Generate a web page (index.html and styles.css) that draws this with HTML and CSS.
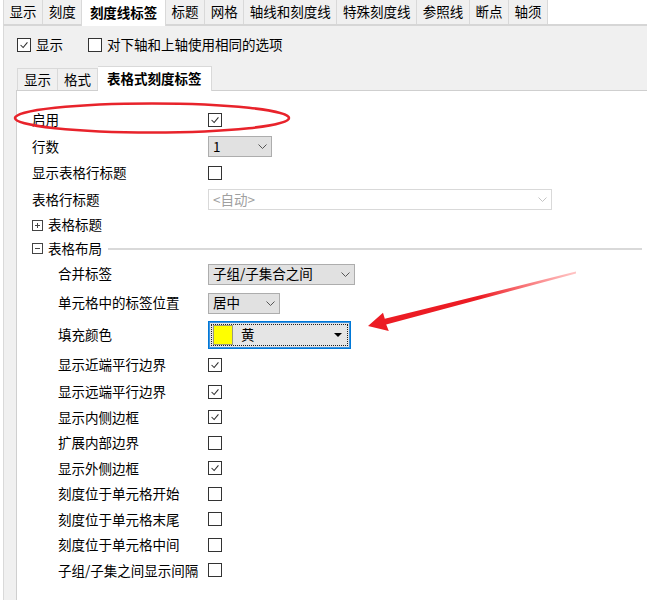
FILE: index.html
```html
<!DOCTYPE html>
<html lang="zh-CN">
<head>
<meta charset="utf-8">
<title>刻度线标签</title>
<link rel="stylesheet" href="styles.css">
</head>
<body>
<div class="tabs">
  <div class="tab">显示</div>
  <div class="tab">刻度</div>
  <div class="tab active">刻度线标签</div>
  <div class="tab">标题</div>
  <div class="tab">网格</div>
  <div class="tab">轴线和刻度线</div>
  <div class="tab">特殊刻度线</div>
  <div class="tab">参照线</div>
  <div class="tab">断点</div>
  <div class="tab">轴须</div>
</div>
<div class="panel">
  <div class="opts">
    <div class="opt"><span class="cb"><svg viewBox="0 0 14 14"><polyline points="3,7 6,10 11,4"/></svg></span>显示</div>
    <div class="opt second"><span class="cb"></span>对下轴和上轴使用相同的选项</div>
  </div>
  <div class="subtabs">
    <div class="stab">显示</div>
    <div class="stab">格式</div>
    <div class="stab active">表格式刻度标签</div>
  </div>
  <div class="inner">
    <div class="row h27"><div class="lbl">启用</div><span class="cb"><svg viewBox="0 0 14 14"><polyline points="3,7 6,10 11,4"/></svg></span></div>
    <div class="row h27"><div class="lbl">行数</div><div class="dd w-rows"><span>1</span><svg class="chev" viewBox="0 0 9 5"><polyline points="0.5,0.5 4.5,4.5 8.5,0.5"/></svg></div></div>
    <div class="row h26"><div class="lbl">显示表格行标题</div><span class="cb"></span></div>
    <div class="row h27"><div class="lbl">表格行标题</div><div class="dd disabled w-title"><span>&lt;自动&gt;</span><svg class="chev" viewBox="0 0 9 5"><polyline points="0.5,0.5 4.5,4.5 8.5,0.5"/></svg></div></div>
    <div class="row h24"><div class="section"><svg class="exp" viewBox="0 0 11 11"><rect x="0.5" y="0.5" width="10" height="10"/><line x1="3" y1="5.5" x2="8" y2="5.5"/><line x1="5.5" y1="3" x2="5.5" y2="8"/></svg>表格标题</div></div>
    <div class="row h23"><div class="section"><svg class="exp" viewBox="0 0 11 11"><rect x="0.5" y="0.5" width="10" height="10"/><line x1="3" y1="5.5" x2="8" y2="5.5"/></svg>表格布局</div><div class="rule"></div></div>
    <div class="row sub h28"><div class="lbl">合并标签</div><div class="dd w-merge"><span>子组/子集合之间</span><svg class="chev" viewBox="0 0 9 5"><polyline points="0.5,0.5 4.5,4.5 8.5,0.5"/></svg></div></div>
    <div class="row sub h30"><div class="lbl">单元格中的标签位置</div><div class="dd w-pos"><span>居中</span><svg class="chev" viewBox="0 0 9 5"><polyline points="0.5,0.5 4.5,4.5 8.5,0.5"/></svg></div></div>
    <div class="row sub h33"><div class="lbl">填充颜色</div><div class="color"><div class="focus"><span class="swatch"></span><span class="cname">黄</span><svg class="tri" viewBox="0 0 8 4"><polygon points="0,0 8,0 4,4"/></svg></div></div></div>
    <div class="row sub h28"><div class="lbl">显示近端平行边界</div><span class="cb"><svg viewBox="0 0 14 14"><polyline points="3,7 6,10 11,4"/></svg></span></div>
    <div class="row sub"><div class="lbl">显示远端平行边界</div><span class="cb"><svg viewBox="0 0 14 14"><polyline points="3,7 6,10 11,4"/></svg></span></div>
    <div class="row sub"><div class="lbl">显示内侧边框</div><span class="cb"><svg viewBox="0 0 14 14"><polyline points="3,7 6,10 11,4"/></svg></span></div>
    <div class="row sub"><div class="lbl">扩展内部边界</div><span class="cb"></span></div>
    <div class="row sub"><div class="lbl">显示外侧边框</div><span class="cb"><svg viewBox="0 0 14 14"><polyline points="3,7 6,10 11,4"/></svg></span></div>
    <div class="row sub"><div class="lbl">刻度位于单元格开始</div><span class="cb"></span></div>
    <div class="row sub"><div class="lbl">刻度位于单元格末尾</div><span class="cb"></span></div>
    <div class="row sub"><div class="lbl">刻度位于单元格中间</div><span class="cb"></span></div>
    <div class="row sub"><div class="lbl">子组/子集之间显示间隔</div><span class="cb"></span></div>
  </div>
</div>
<svg class="overlay" viewBox="0 0 647 600">
  <defs>
    <linearGradient id="fade" gradientUnits="userSpaceOnUse" x1="576" y1="272" x2="480" y2="297">
      <stop offset="0" stop-color="#ff5a5a" stop-opacity="0.35"/>
      <stop offset="1" stop-color="#ec1c24"/>
    </linearGradient>
  </defs>
  <ellipse cx="152" cy="118" rx="137" ry="14.5" class="ring"/>
  <polygon points="576,271.6 576,273.4 386.2,324.4 388.8,331 368,326 383,312.8 384.8,318.8" fill="url(#fade)"/>
</svg>
</body>
</html>
```
FILE: styles.css
```css
* { box-sizing: border-box; }
html, body { margin: 0; padding: 0; }
body {
  width: 647px;
  height: 600px;
  overflow: hidden;
  position: relative;
  background: #fff;
  font-family: "Noto Sans CJK SC", "Microsoft YaHei", sans-serif;
  font-size: 13.5px;
  color: #000;
  line-height: 1;
}

/* top tab strip */
.tabs {
  display: flex;
  height: 24px;
  padding-left: 3px;
}
.tab {
  height: 24px;
  padding: 0 5.6px;
  background: #f0f0f0;
  border-right: 1px solid #d9d9d9;
  display: flex;
  align-items: center;
  white-space: nowrap;
}
.tab:first-child { border-left: 1px solid #d9d9d9; }
.tab.active {
  background: #fff;
  font-weight: bold;
  height: 26px;
  padding: 0 7.5px;
  position: relative;
  z-index: 1;
  border-left: 1px solid #d9d9d9;
  margin-left: -1px;
}

/* outer panel */
.panel {
  margin-left: 3px;
  border-top: 2px solid #d6d6d6;
  border-left: 1px solid #d9d9d9;
  background: #f0f0f0;
  height: 576px;
  padding: 9px 0 0 13px;
}
.opts {
  display: flex;
  align-items: center;
  height: 20px;
}
.opt {
  display: flex;
  align-items: center;
  gap: 5px;
}
.opt.second { margin-left: 25px; }

.cb {
  width: 14px;
  height: 14px;
  border: 1px solid #333;
  background: #fff;
  display: inline-flex;
  flex: none;
}
.cb svg {
  width: 12px;
  height: 12px;
  fill: none;
  stroke: #2b2b2b;
  stroke-width: 1.2;
}

/* sub tabs */
.subtabs {
  display: flex;
  align-items: flex-end;
  height: 24px;
  margin-top: 11px;
}
.stab {
  height: 22px;
  padding: 0 6px;
  background: #f0f0f0;
  border: 1px solid #d9d9d9;
  border-bottom: none;
  border-left: none;
  display: flex;
  align-items: center;
  white-space: nowrap;
}
.stab:first-child { border-left: 1px solid #d9d9d9; }
.stab.active {
  height: 25px;
  margin-bottom: -1px;
  padding: 0 9px;
  background: #fff;
  font-weight: bold;
  position: relative;
  z-index: 1;
}

/* property grid */
.inner {
  margin-left: -1px;
  border-top: 1px solid #cfcfcf;
  border-left: 1px solid #cfcfcf;
  background: #fff;
  height: 520px;
  padding: 15px 0 0 15px;
}
.row {
  display: flex;
  align-items: center;
  height: 25.5px;
}
.h23 { height: 23px; }
.h24 { height: 24px; }
.h26 { height: 26px; }
.h27 { height: 27px; }
.h28 { height: 28px; }
.h30 { height: 30px; }
.h33 { height: 33px; }
.lbl {
  width: 176px;
  flex: none;
  white-space: nowrap;
}
.sub .lbl { padding-left: 26px; }

.dd {
  height: 21px;
  background: #e1e1e1;
  border: 1px solid #adadad;
  display: flex;
  align-items: center;
  justify-content: space-between;
  padding: 0 4px 0 4px;
  white-space: nowrap;
}
.dd .chev {
  width: 9px;
  height: 5px;
  fill: none;
  stroke: #555;
  stroke-width: 1;
}
.dd.disabled {
  background: #fff;
  border-color: #d9d9d9;
  color: #a0a0a0;
}
.dd.disabled .chev { stroke: #c4c4c4; }
.w-rows { width: 64px; }
.w-title { width: 344px; }
.w-merge { width: 147px; }
.w-pos { width: 72px; }

.section {
  display: flex;
  align-items: center;
  gap: 5px;
  white-space: nowrap;
}
.exp {
  width: 11px;
  height: 11px;
  fill: none;
  stroke: #444;
  stroke-width: 1;
}
.rule {
  flex: 1;
  height: 2px;
  background: #d9d9d9;
  margin: 1px 5px 0 6px;
}

.color {
  width: 143px;
  height: 28px;
  border: 1px solid #0078d7;
  box-shadow: inset 0 0 0 1px #3c93e0;
  background: #e5e5e5;
  padding: 2px;
}
.focus {
  height: 100%;
  border: 1px dotted #222;
  display: flex;
  align-items: center;
  padding: 0 5px 0 1px;
}
.swatch {
  width: 20px;
  height: 20px;
  background: #ffff00;
  border: 1px solid #9a9a80;
  flex: none;
}
.cname {
  margin-left: 8px;
  flex: 1;
}
.tri {
  width: 8px;
  height: 4px;
  fill: #000;
}

/* annotations */
.overlay {
  position: absolute;
  left: 0;
  top: 0;
  width: 647px;
  height: 600px;
  pointer-events: none;
}
.ring {
  fill: none;
  stroke: #e8232b;
  stroke-width: 2.6;
}
```
